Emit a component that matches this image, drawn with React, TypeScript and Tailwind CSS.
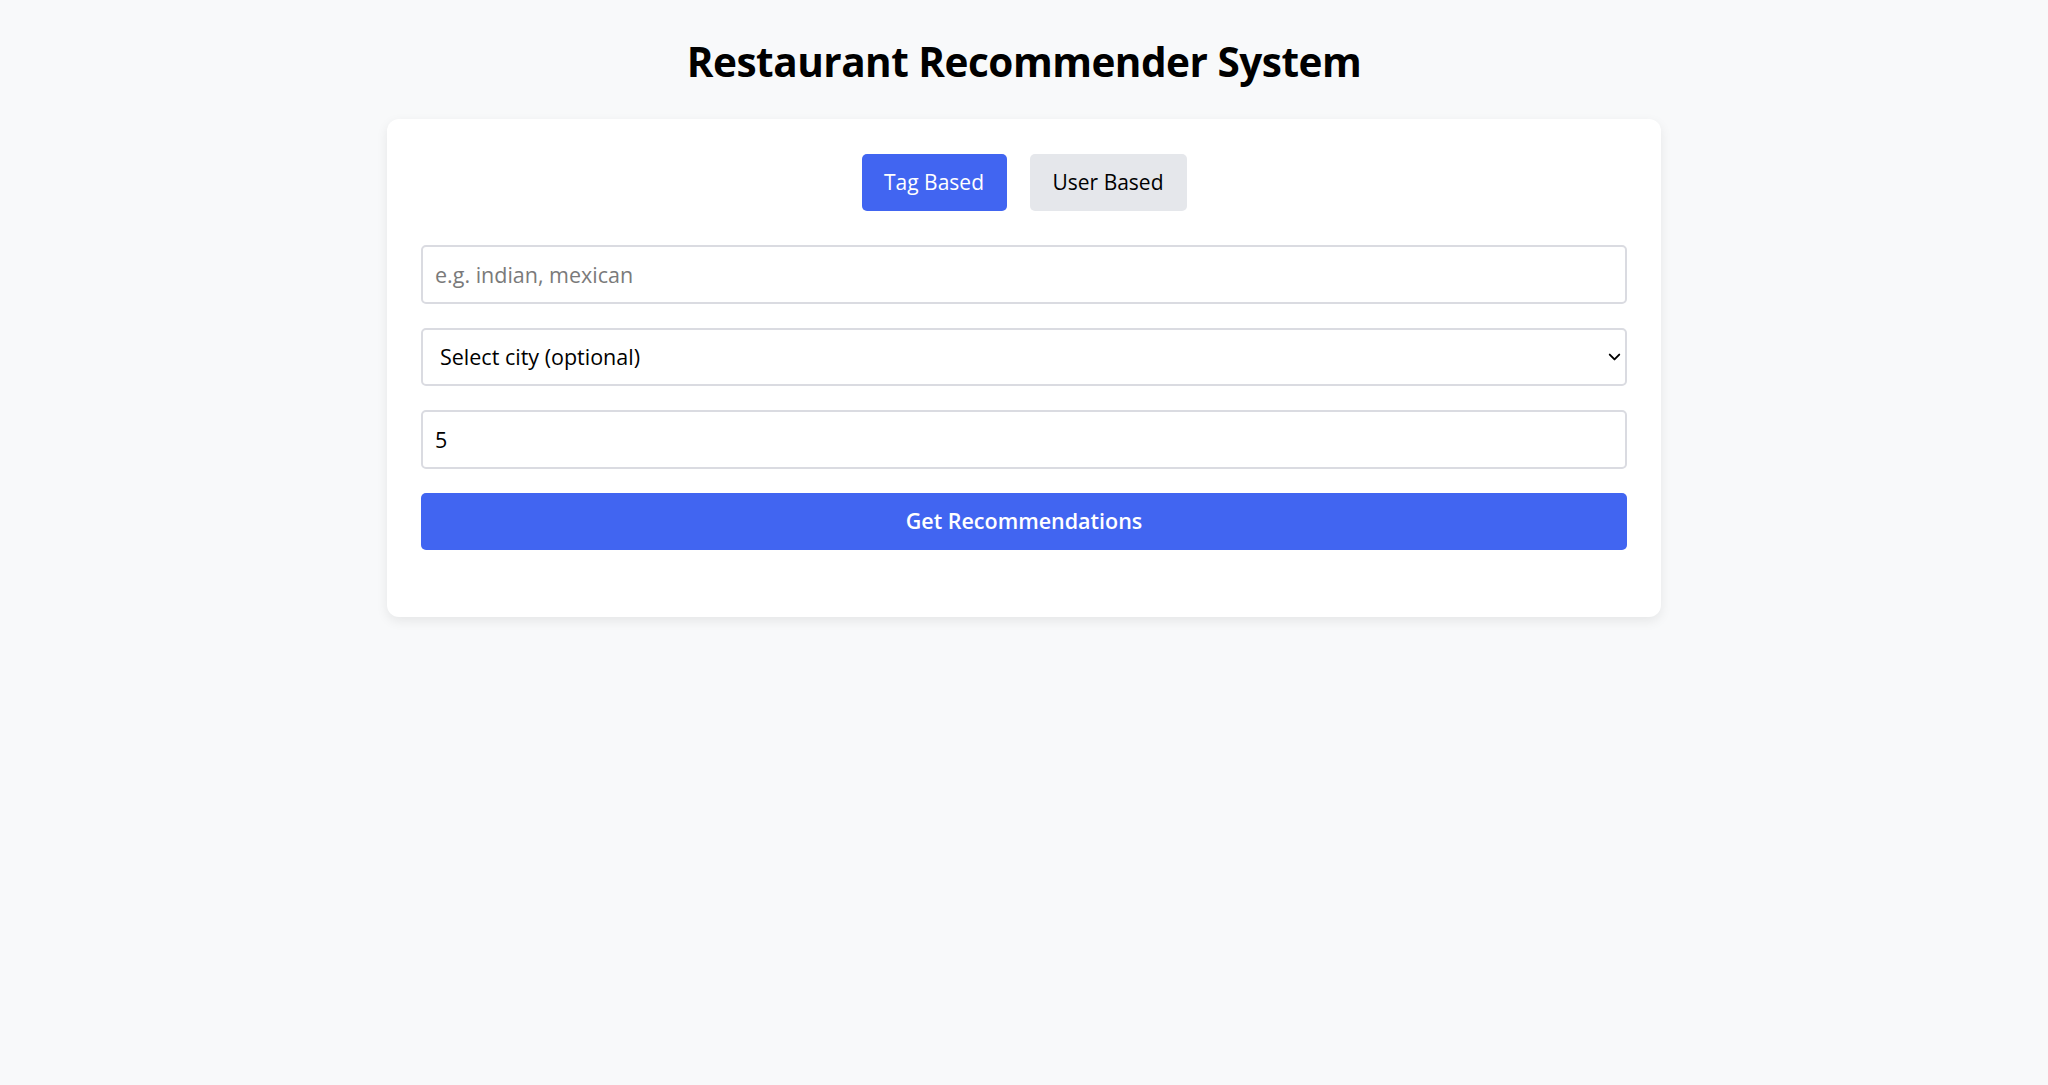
import React, { useState } from 'react';
import { ChevronDown } from 'lucide-react';

export default function App() {
  const [mode, setMode] = useState<'tag' | 'user'>('tag');

  return (
    <div className="min-h-screen bg-[#f8f9fa] pt-[36px] font-['Open_Sans',sans-serif] text-black">
      <h1 className="text-center text-[40.5px] font-bold leading-[52px] tracking-[-0.5px]">
        Restaurant Recommender System
      </h1>

      {/* Main card */}
      <div className="mx-auto mt-[31px] w-[1274px] rounded-[12px] bg-white px-[34px] pt-[35px] pb-[67px] shadow-[0_4px_12px_rgba(0,0,0,0.08)]">
        <div className="flex justify-center gap-[23px]">
          <button
            onClick={() => setMode('tag')}
            className={`h-[57px] w-[145px] rounded-[5px] text-[21px] ${mode === 'tag' ? 'bg-[#4165f1] text-white' : 'bg-[#e5e7eb] text-black'}`}
          >
            Tag Based
          </button>
          <button
            onClick={() => setMode('user')}
            className={`h-[57px] w-[157px] rounded-[5px] text-[21px] ${mode === 'user' ? 'bg-[#4165f1] text-white' : 'bg-[#e5e7eb] text-black'}`}
          >
            User Based
          </button>
        </div>

        <form className="mt-[34px] flex flex-col gap-[24px]" onSubmit={(e) => e.preventDefault()}>
          <input
            type="text"
            placeholder="e.g. indian, mexican"
            className="h-[59px] w-full rounded-[5px] border-2 border-[#dadbe1] px-[12px] text-[21.5px] placeholder:text-[#7a7a7a] outline-none"
          />
          <div className="relative">
            <select className="h-[58px] w-full appearance-none rounded-[5px] border-2 border-[#dadbe1] bg-white pl-[17px] text-[21.5px] outline-none">
              <option>Select city (optional)</option>
            </select>
            <ChevronDown className="pointer-events-none absolute right-[3px] top-1/2 h-[19px] w-[19px] -translate-y-1/2" strokeWidth={2.4} />
          </div>
          <input
            type="number"
            defaultValue={5}
            className="h-[59px] w-full rounded-[5px] border-2 border-[#dadbe1] px-[12px] text-[21.5px] outline-none"
          />
          <button
            type="submit"
            className="h-[57px] w-full rounded-[5px] bg-[#4165f1] text-[21.5px] font-semibold text-white"
          >
            Get Recommendations
          </button>
        </form>
      </div>
    </div>
  );
}
